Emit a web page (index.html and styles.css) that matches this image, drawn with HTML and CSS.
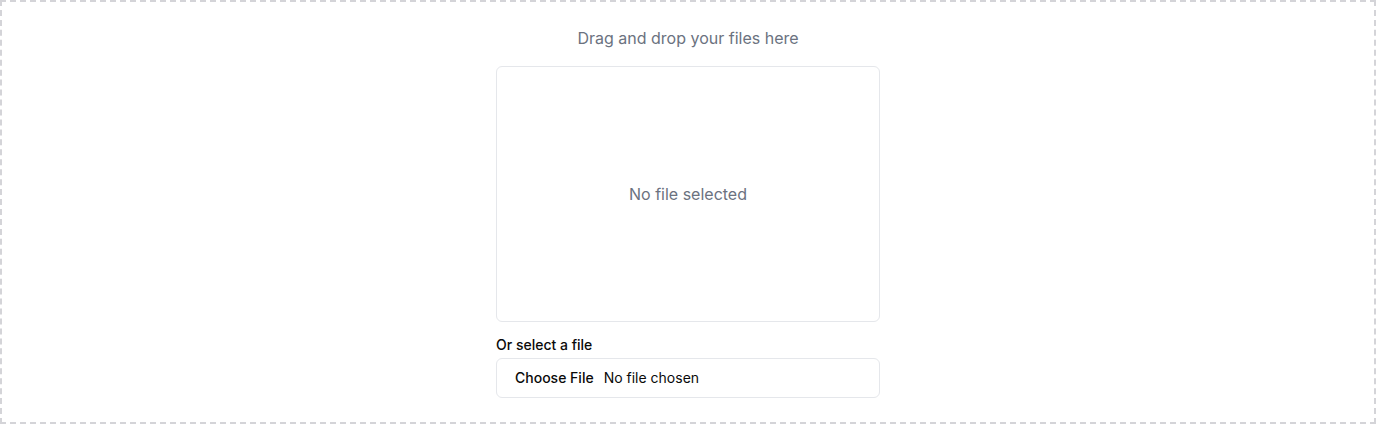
FILE: index.html
```html
<!DOCTYPE html>
<html lang="en">
<head>
<meta charset="utf-8">
<title>Upload</title>
<link rel="stylesheet" href="styles.css">
</head>
<body>
<div class="dropzone">
  <div class="inner">
    <p class="title">Drag and drop your files here</p>
    <div class="preview">
      <span class="empty">No file selected</span>
    </div>
    <label class="label" for="file">Or select a file</label>
    <input class="file" id="file" type="file">
  </div>
</div>
</body>
</html>
```
FILE: styles.css
```css
* { box-sizing: border-box; }
html, body { margin: 0; padding: 0; background: #fff; }
body {
  font-family: Inter, "Liberation Sans", sans-serif;
  color: #0a0a0a;
}
.dropzone {
  height: 424px;
  border: 2px dashed #d4d4d8;
  padding: 24px;
  display: flex;
  justify-content: center;
}
.inner {
  width: 384px;
  display: flex;
  flex-direction: column;
}
.title {
  margin: 0 0 16px;
  font-size: 16px;
  line-height: 24px;
  color: #6b7280;
  text-align: center;
}
.preview {
  height: 256px;
  border: 1px solid #e5e7eb;
  border-radius: 6px;
  display: flex;
  align-items: center;
  justify-content: center;
}
.empty {
  font-size: 16px;
  line-height: 24px;
  color: #6b7280;
}
.label {
  margin-top: 13px;
  margin-bottom: 3px;
  font-size: 14px;
  line-height: 20px;
  font-weight: 500;
}
.file {
  height: 40px;
  width: 100%;
  border: 1px solid #e5e7eb;
  border-radius: 6px;
  padding: 9px 12px 7px;
  font-family: Inter, "Liberation Sans", sans-serif;
  font-size: 14px;
  line-height: 20px;
  color: #0a0a0a;
  background: #fff;
}
.file::file-selector-button {
  border: 0;
  background: transparent;
  font-family: Inter, "Liberation Sans", sans-serif;
  font-size: 14px;
  font-weight: 500;
  color: #0a0a0a;
}
```
